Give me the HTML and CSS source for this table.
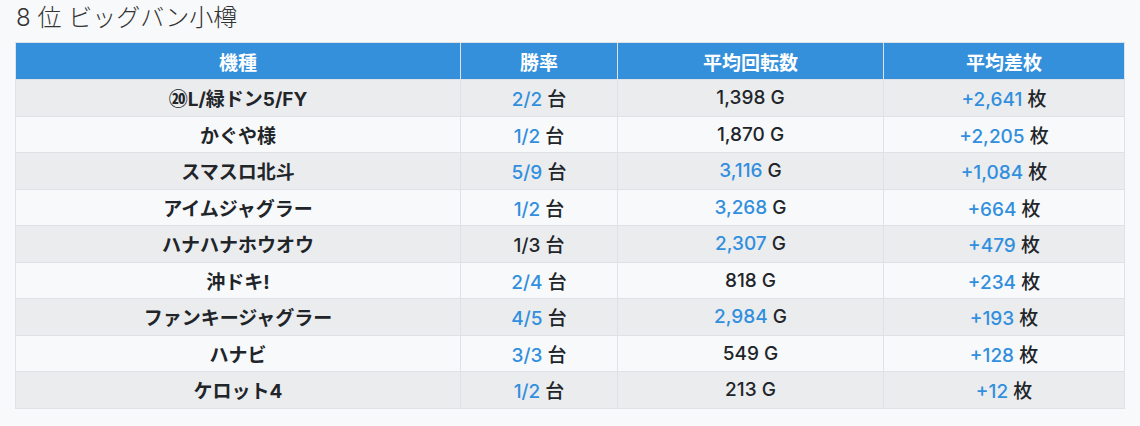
FILE: index.html
```html
<!DOCTYPE html>
<html lang="ja">
<head>
<meta charset="utf-8">
<link rel="stylesheet" href="styles.css">
</head>
<body>
<h2 class="title">8 位 ビッグバン小樽</h2>
<table class="rank">
<thead>
<tr><th class="c1">機種</th><th class="c2">勝率</th><th class="c3">平均回転数</th><th class="c4">平均差枚</th></tr>
</thead>
<tbody>
<tr><td class="name">⑳L/緑ドン5/FY</td><td><span class="hl">2/2</span> <span class="u">台</span></td><td>1,398 G</td><td><span class="hl">+2,641</span> <span class="u">枚</span></td></tr>
<tr><td class="name">かぐや様</td><td><span class="hl">1/2</span> <span class="u">台</span></td><td>1,870 G</td><td><span class="hl">+2,205</span> <span class="u">枚</span></td></tr>
<tr><td class="name">スマスロ北斗</td><td><span class="hl">5/9</span> <span class="u">台</span></td><td><span class="hl">3,116</span> G</td><td><span class="hl">+1,084</span> <span class="u">枚</span></td></tr>
<tr><td class="name">アイムジャグラー</td><td><span class="hl">1/2</span> <span class="u">台</span></td><td><span class="hl">3,268</span> G</td><td><span class="hl">+664</span> <span class="u">枚</span></td></tr>
<tr><td class="name">ハナハナホウオウ</td><td>1/3 <span class="u">台</span></td><td><span class="hl">2,307</span> G</td><td><span class="hl">+479</span> <span class="u">枚</span></td></tr>
<tr><td class="name">沖ドキ!</td><td><span class="hl">2/4</span> <span class="u">台</span></td><td>818 G</td><td><span class="hl">+234</span> <span class="u">枚</span></td></tr>
<tr><td class="name">ファンキージャグラー</td><td><span class="hl">4/5</span> <span class="u">台</span></td><td><span class="hl">2,984</span> G</td><td><span class="hl">+193</span> <span class="u">枚</span></td></tr>
<tr><td class="name">ハナビ</td><td><span class="hl">3/3</span> <span class="u">台</span></td><td>549 G</td><td><span class="hl">+128</span> <span class="u">枚</span></td></tr>
<tr><td class="name">ケロット4</td><td><span class="hl">1/2</span> <span class="u">台</span></td><td>213 G</td><td><span class="hl">+12</span> <span class="u">枚</span></td></tr>
</tbody>
</table>
</body>
</html>
```
FILE: styles.css
```css
html, body {
  margin: 0;
  padding: 0;
  background: #f8f9fb;
}
body {
  font-family: Inter, "Noto Sans CJK JP", sans-serif;
  color: #212529;
  padding: 0 15px;
}
.title {
  margin: 0;
  padding: 3px 0 0 1px;
  height: 42px;
  box-sizing: border-box;
  font-family: Inter, "Noto Sans CJK JP", sans-serif;
  font-size: 24px;
  font-weight: 300;
  line-height: 30px;
  color: #333;
}
.rank {
  width: 1110px;
  table-layout: fixed;
  border-collapse: collapse;
  font-size: 19px;
  font-weight: 500;
}
.rank th, .rank td {
  border: 1px solid #dee2e6;
  text-align: center;
  padding: 0 6px;
  white-space: nowrap;
}
.rank th {
  background: #3590dc;
  color: #fff;
  height: 36px;
  font-size: 19px;
  font-weight: 700;
}
.rank td {
  height: 35.5px;
}
.rank tbody tr:nth-child(odd) td { background: #ebecee; }
.rank tbody tr:nth-child(even) td { background: #f8f9fa; }
.c1 { width: 432px; }
.c2 { width: 144px; }
.c3 { width: 253px; }
.c4 { width: auto; }
.name { font-weight: 700; }
.u { font-weight: 500; }
.hl {
  color: #318fde;
  font-weight: 500;
}
```
